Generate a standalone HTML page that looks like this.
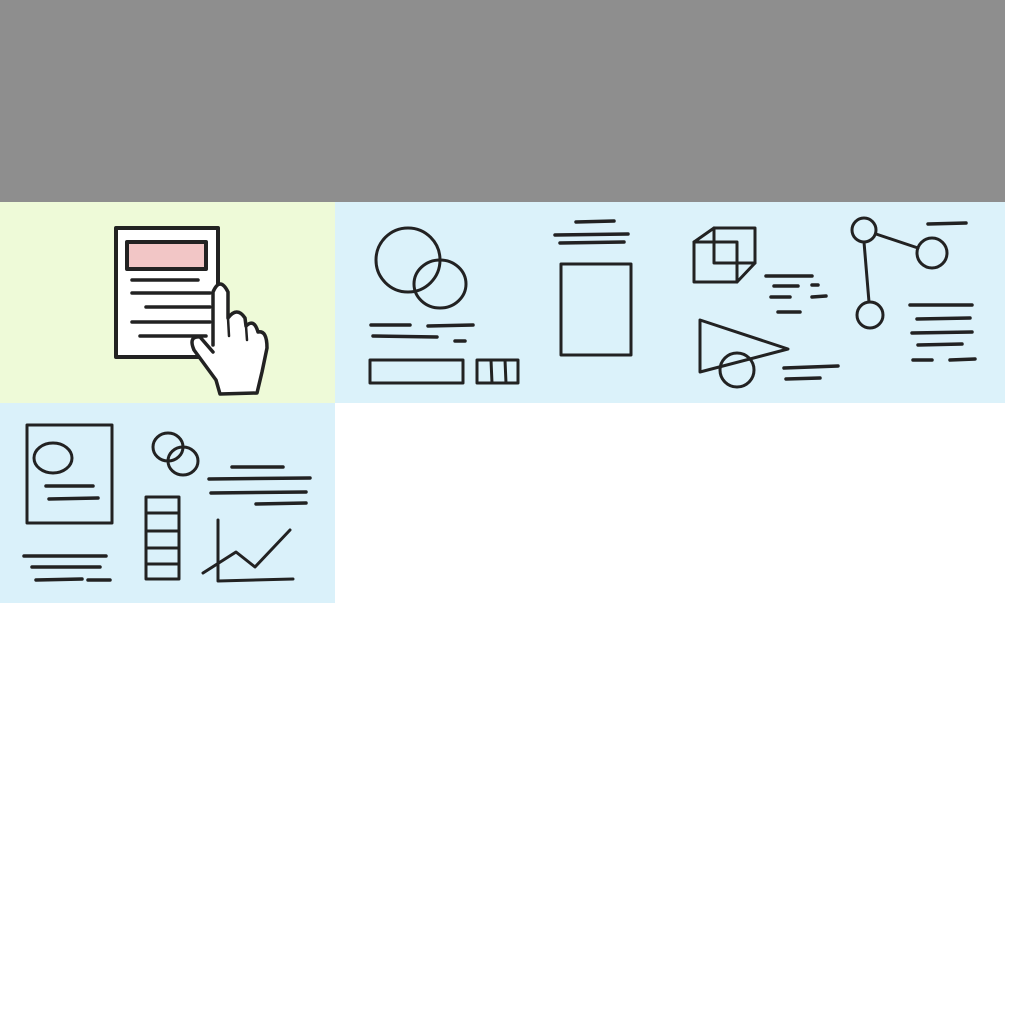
<!DOCTYPE html>
<html><head><meta charset="utf-8"><style>
html,body{margin:0;padding:0;background:#fff;width:1024px;height:1024px;overflow:hidden}
svg{display:block}
</style></head><body>
<svg width="1024" height="1024" viewBox="0 0 1024 1024" xmlns="http://www.w3.org/2000/svg">
<rect x="0" y="0" width="1005" height="202" fill="#8e8e8e"/>

<!-- tile backgrounds -->
<rect x="0" y="202" width="335" height="201" fill="#eefad8"/>
<rect x="335" y="202" width="335" height="201" fill="#dbf2fa"/>
<rect x="670" y="202" width="335" height="201" fill="#dcf2fa"/>
<rect x="0" y="403" width="335" height="200" fill="#daf1fa"/>

<g fill="none" stroke="#222" stroke-linecap="round" stroke-linejoin="round">
<!-- tile1 -->
<rect x="116" y="228" width="102" height="129" fill="#fff" stroke-width="4"/>
<rect x="127" y="242" width="79" height="27" fill="#f2c6c6" stroke-width="4"/>
<g stroke-width="3.5">
<line x1="132" y1="280" x2="198" y2="280"/><line x1="132" y1="293" x2="210" y2="293"/>
<line x1="146" y1="307" x2="210" y2="307"/><line x1="132" y1="322" x2="210" y2="322"/>
<line x1="140" y1="336" x2="206" y2="336"/></g>
<path d="M213,345 L213,292 Q220,276 228,292 L228,318 Q237,306 245,318 L246,326 Q254,318 258,332 Q267,330 267,348 L262,372 L257,393 L220,394 L216,380 L194,350 Q188,336 200,337 L213,352" fill="#fff" stroke-width="3.5"/>
<path d="M228,318 L229,336 M246,326 L247,340" stroke-width="2.5"/>

<!-- tile2 -->
<g stroke-width="3">
<circle cx="408" cy="260" r="32"/><ellipse cx="440" cy="284" rx="26" ry="24"/>
<rect x="370" y="360" width="93" height="23"/><rect x="477" y="360" width="41" height="23"/>
<line x1="491" y1="360" x2="492" y2="383"/><line x1="505" y1="360" x2="506" y2="383"/>
<rect x="561" y="264" width="70" height="91"/></g>
<g stroke-width="3.5">
<line x1="371" y1="325" x2="410" y2="325"/><line x1="428" y1="326" x2="473" y2="325"/>
<line x1="373" y1="336" x2="437" y2="337"/><line x1="455" y1="341" x2="465" y2="341"/>
<line x1="576" y1="222" x2="614" y2="221"/><line x1="555" y1="235" x2="628" y2="234"/>
<line x1="560" y1="243" x2="624" y2="242"/></g>

<!-- tile3 -->
<g stroke-width="3">
<rect x="694" y="242" width="43" height="40"/><rect x="714" y="228" width="41" height="35"/>
<line x1="694" y1="242" x2="714" y2="228"/><line x1="737" y1="282" x2="755" y2="263"/>
<path d="M700,320 L788,349 L700,372 Z"/><circle cx="737" cy="370" r="17"/>
<circle cx="864" cy="230" r="12"/><circle cx="932" cy="253" r="15"/><circle cx="870" cy="315" r="13"/>
<line x1="876" y1="234" x2="918" y2="248"/><line x1="864" y1="242" x2="869" y2="302"/></g>
<g stroke-width="3.5">
<line x1="766" y1="276" x2="812" y2="276"/><line x1="774" y1="286" x2="798" y2="286"/><line x1="812" y1="285" x2="818" y2="285"/>
<line x1="771" y1="297" x2="790" y2="297"/><line x1="812" y1="297" x2="826" y2="296"/>
<line x1="778" y1="312" x2="800" y2="312"/>
<line x1="784" y1="368" x2="838" y2="366"/><line x1="786" y1="379" x2="820" y2="378"/>
<line x1="928" y1="224" x2="966" y2="223"/>
<line x1="910" y1="305" x2="972" y2="305"/><line x1="917" y1="319" x2="970" y2="318"/>
<line x1="912" y1="333" x2="972" y2="332"/><line x1="918" y1="345" x2="962" y2="344"/>
<line x1="913" y1="360" x2="932" y2="360"/><line x1="950" y1="360" x2="975" y2="359"/></g>

<!-- tile4 -->
<g stroke-width="3">
<rect x="27" y="425" width="85" height="98"/><ellipse cx="53" cy="458" rx="19" ry="15"/>
<ellipse cx="168" cy="447" rx="15" ry="14"/><ellipse cx="183" cy="461" rx="15" ry="14"/>
<rect x="146" y="497" width="33" height="82"/>
<line x1="146" y1="513" x2="179" y2="513"/><line x1="146" y1="531" x2="179" y2="531"/>
<line x1="146" y1="548" x2="179" y2="548"/><line x1="146" y1="564" x2="179" y2="564"/>
<path d="M218,520 L218,581 L293,579"/><path d="M203,573 L236,552 L255,567 L290,530"/></g>
<g stroke-width="3.5">
<line x1="46" y1="486" x2="93" y2="486"/><line x1="49" y1="499" x2="98" y2="498"/>
<line x1="232" y1="467" x2="283" y2="467"/><line x1="209" y1="479" x2="310" y2="478"/>
<line x1="211" y1="493" x2="306" y2="492"/><line x1="256" y1="504" x2="306" y2="503"/>
<line x1="24" y1="556" x2="106" y2="556"/><line x1="32" y1="567" x2="100" y2="567"/>
<line x1="36" y1="580" x2="82" y2="579"/><line x1="88" y1="580" x2="110" y2="580"/></g>
</g>
</svg>
</body></html>
